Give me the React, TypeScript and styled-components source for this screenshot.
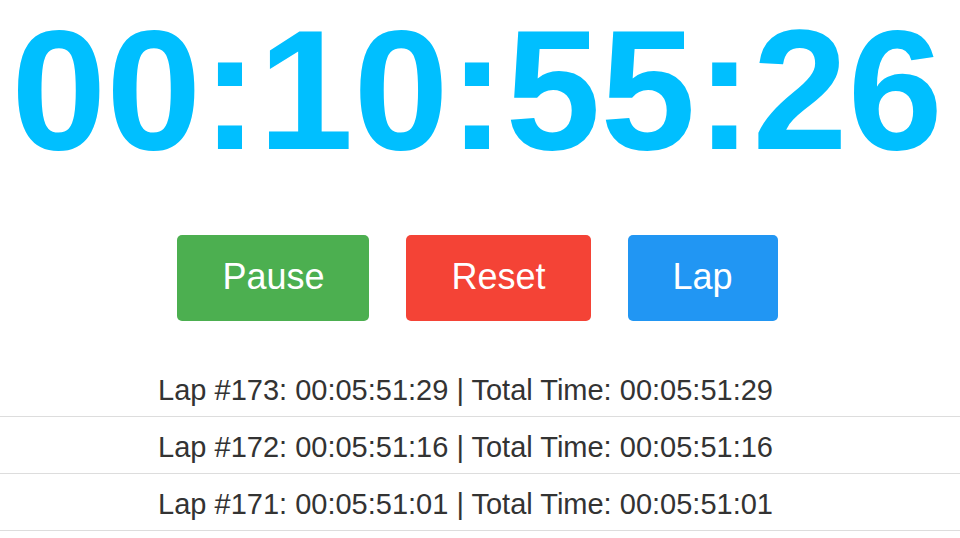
import React from "react";
import styled, { createGlobalStyle } from "styled-components";

const GlobalStyle = createGlobalStyle`
  html, body {
    margin: 0;
    padding: 0;
    background: #ffffff;
    font-family: "Liberation Sans", Arial, Helvetica, sans-serif;
  }
`;

const Page = styled.div`
  display: flex;
  flex-direction: column;
  align-items: stretch;
  width: 960px;
`;

const Timer = styled.div`
  margin-top: -8px;
  padding-right: 6px;
  font-size: 171px;
  line-height: 196px;
  font-weight: 700;
  color: #00bfff;
  text-align: center;
  white-space: nowrap;
`;

const Controls = styled.div`
  display: flex;
  justify-content: center;
  gap: 37px;
  margin-top: 47px;
  padding-right: 5px;
`;

const Button = styled.button<{ $bg: string }>`
  display: block;
  height: 86px;
  padding: 0 45px 2px;
  border: none;
  border-radius: 5px;
  background: ${(p) => p.$bg};
  color: #ffffff;
  font-family: "Liberation Sans", Arial, Helvetica, sans-serif;
  font-size: 36px;
  line-height: 84px;
  cursor: pointer;
`;

const LapList = styled.ul`
  list-style: none;
  margin: 39px 0 0;
  padding: 0;
`;

const LapRow = styled.li`
  padding: 14px 29px 9px 0;
  border-bottom: 1px solid #dddddd;
  font-size: 29px;
  line-height: 33px;
  color: #333333;
  text-align: center;
  white-space: nowrap;
`;

const laps = [
  { n: 173, lap: "00:05:51:29", total: "00:05:51:29" },
  { n: 172, lap: "00:05:51:16", total: "00:05:51:16" },
  { n: 171, lap: "00:05:51:01", total: "00:05:51:01" },
];

export default function App() {
  return (
    <>
      <GlobalStyle />
      <Page>
        <Timer>00:10:55:26</Timer>
        <Controls>
          <Button $bg="#4caf50">Pause</Button>
          <Button $bg="#f44336">Reset</Button>
          <Button $bg="#2196f3">Lap</Button>
        </Controls>
        <LapList>
          {laps.map((l) => (
            <LapRow key={l.n}>
              Lap #{l.n}: {l.lap} | Total Time: {l.total}
            </LapRow>
          ))}
        </LapList>
      </Page>
    </>
  );
}
